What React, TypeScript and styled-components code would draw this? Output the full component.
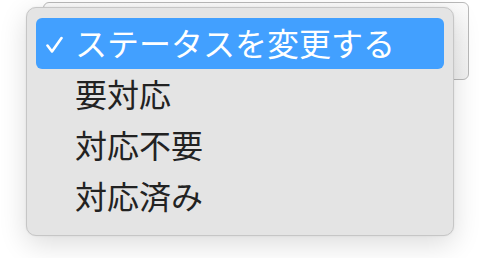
import { FC } from "react";
import styled, { createGlobalStyle } from "styled-components";

const GlobalStyle = createGlobalStyle`
  html, body {
    margin: 0;
    padding: 0;
    background: #ffffff;
  }
  body {
    font-family: "Noto Sans CJK JP", "Noto Sans", sans-serif;
  }
`;

const Stage = styled("div")`
  position: relative;
  width: 492px;
  height: 258px;
  overflow: hidden;
`;

const SelectBox = styled("div")`
  position: absolute;
  left: 43px;
  top: 2px;
  width: 424px;
  height: 76px;
  border: 1px solid #b9b9b9;
  border-radius: 6px;
  background: linear-gradient(#fbfbfb, #f1f1f1);
`;

const Menu = styled("ul")`
  position: absolute;
  left: 26px;
  top: 7px;
  width: 428px;
  margin: 0;
  padding: 10px 9px 13px;
  box-sizing: border-box;
  list-style: none;
  background: #e4e4e4;
  border: 1px solid #c6c6c6;
  border-radius: 10px;
  box-shadow: 0 8px 28px rgba(0, 0, 0, 0.14), 0 0 2px rgba(0, 0, 0, 0.08);
`;

const Item = styled("li")<{ $active?: boolean }>`
  display: flex;
  align-items: center;
  height: 51px;
  padding: 0 0 4px 10px;
  box-sizing: border-box;
  border-radius: 6px;
  font-size: 32px;
  line-height: 1;
  color: ${(p) => (p.$active ? "#ffffff" : "#222222")};
  background: ${(p) => (p.$active ? "#42a0ff" : "transparent")};
`;

const Check = styled("span")`
  display: inline-flex;
  width: 29px;
  height: 20px;
  margin-top: 8px;
`;

const options = ["ステータスを変更する", "要対応", "対応不要", "対応済み"];

const App: FC = () => {
  return (
    <>
      <GlobalStyle />
      <Stage>
        <SelectBox />
        <Menu>
          {options.map((label, i) => (
            <Item key={label} $active={i === 0}>
              <Check>
                {i === 0 && (
                  <svg width="17" height="18" viewBox="0 0 17 18">
                    <path
                      d="M1.5 9.5 L6 15.5 L15.5 2"
                      fill="none"
                      stroke="#ffffff"
                      strokeWidth="2.6"
                      strokeLinecap="round"
                      strokeLinejoin="round"
                    />
                  </svg>
                )}
              </Check>
              {label}
            </Item>
          ))}
        </Menu>
      </Stage>
    </>
  );
};

export default App;
